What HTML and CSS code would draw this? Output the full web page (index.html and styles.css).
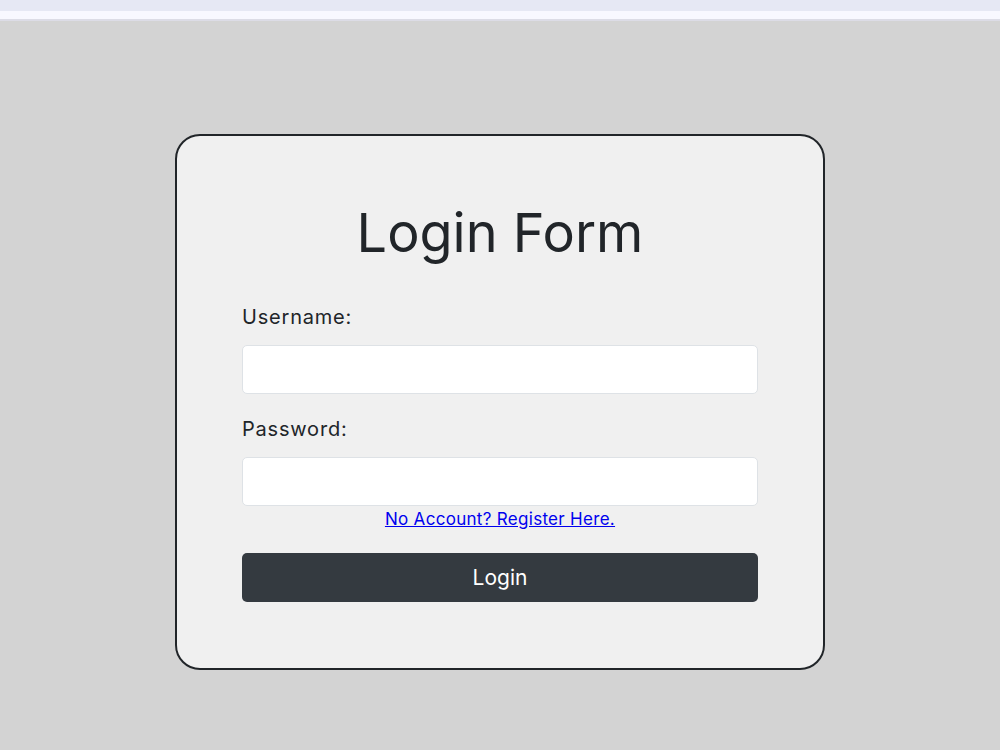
FILE: index.html
```html
<!DOCTYPE html>
<html lang="en">
<head>
  <meta charset="UTF-8">
  <title>Login Form</title>
  <link rel="stylesheet" href="styles.css">
</head>
<body>
  <div class="topbar"></div>

  <div class="page">
    <div class="card">
      <h1>Login Form</h1>
      <form class="login-form" onsubmit="return false">
        <label for="username">Username:</label>
        <input type="text" id="username">

        <label for="password">Password:</label>
        <input type="password" id="password">

        <a href="#" class="register">No Account? Register Here.</a>

        <button type="submit">Login</button>
      </form>
    </div>
  </div>
</body>
</html>
```

FILE: styles.css
```css
body {
  margin: 0;
  font-family: Inter, "Open Sans", sans-serif;
  background: #d3d3d3;
  color: #212529;
}
.topbar {
  height: 8px;
  background: #f8f8ff;
  border-top: 11px solid #e6e8f4;
  border-bottom: 2px solid #dcdce6;
}
.page {
  display: flex;
  justify-content: center;
  padding-top: 113px;
}
.card {
  width: 516px;
  padding: 64px 65px 66px;
  background: #f0f0f0;
  border: 2px solid #212529;
  border-radius: 25px;
}
h1 {
  margin: 0 0 37px;
  font-size: 54px;
  font-weight: 400;
  text-align: center;
  line-height: 65px;
}
.login-form {
  display: flex;
  flex-direction: column;
}
.login-form label {
  font-size: 20px;
  line-height: 30px;
  letter-spacing: 0.8px;
  margin-bottom: 13px;
}
.login-form input {
  height: 49px;
  box-sizing: border-box;
  padding: 0 12px;
  margin: 0 0 20px;
  border: 1px solid #dee2e6;
  border-radius: 5px;
  background: #fff;
  font-size: 16px;
}
.login-form input[type="password"] {
  margin-bottom: 1px;
}
.register {
  align-self: center;
  color: #0000ee;
  font-size: 17px;
  line-height: 24px;
  letter-spacing: 0.3px;
  text-decoration: underline;
}
.login-form button {
  margin-top: 22px;
  height: 49px;
  border: none;
  border-radius: 5px;
  background: #343a40;
  color: #fff;
  font-family: inherit;
  font-size: 21px;
  cursor: pointer;
}
```
